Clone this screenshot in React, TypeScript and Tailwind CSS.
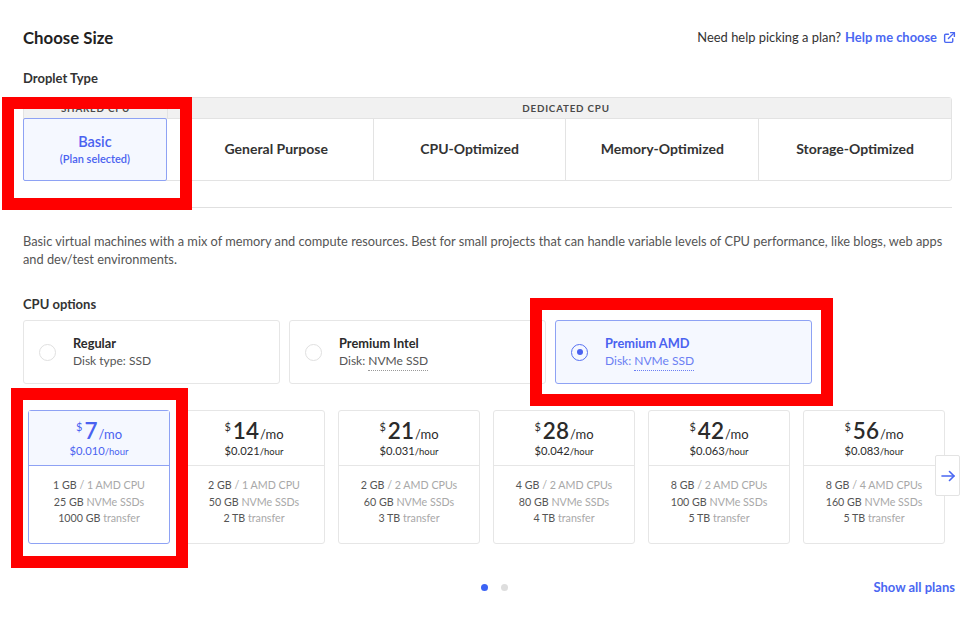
import React from "react";

const plans = [
  { p: "7", h: "0.010", ram: "1 GB", cpu: "1 AMD CPU", ssd: "25 GB", tr: "1000 GB", sel: true },
  { p: "14", h: "0.021", ram: "2 GB", cpu: "1 AMD CPU", ssd: "50 GB", tr: "2 TB" },
  { p: "21", h: "0.031", ram: "2 GB", cpu: "2 AMD CPUs", ssd: "60 GB", tr: "3 TB" },
  { p: "28", h: "0.042", ram: "4 GB", cpu: "2 AMD CPUs", ssd: "80 GB", tr: "4 TB" },
  { p: "42", h: "0.063", ram: "8 GB", cpu: "2 AMD CPUs", ssd: "100 GB", tr: "5 TB" },
  { p: "56", h: "0.083", ram: "8 GB", cpu: "4 AMD CPUs", ssd: "160 GB", tr: "5 TB" },
];

function PlanCard({ d }: { d: (typeof plans)[number] }) {
  const sel = !!d.sel;
  return (
    <div
      className={`w-[142px] h-[134px] shrink-0 rounded-[3px] border flex flex-col ${
        sel ? "border-[#8ea2f4]" : "border-[#e6e6e6]"
      }`}
    >
      <div
        className={`h-[55px] pt-[8px] flex flex-col items-center border-b ${
          sel ? "bg-[#f5f8ff] border-[#8ea2f4] text-[#4a62f0]" : "border-[#e6e6e6] text-[#2b2b2b]"
        }`}
      >
        <div className="h-[23px] flex items-start">
          <span className="text-[11px] leading-[12px] mt-[2px] mr-[2px]">$</span>
          <span className="text-[22.5px] font-semibold leading-[23px]">{d.p}</span>
          <span className="text-[13px] leading-[14px] mt-[8px] ml-[1px]">/mo</span>
        </div>
        <div className="mt-[2px] h-[13px] text-[11.2px] leading-[13px]">
          ${d.h}
          <span className="text-[9.5px]">/hour</span>
        </div>
      </div>
      <div className="flex-1 pt-[11px] flex flex-col items-center text-[10.7px] leading-[16.5px] text-[#a8a8a8]">
        <div>
          <span className="text-[#555]">{d.ram}</span> / {d.cpu}
        </div>
        <div>
          <span className="text-[#555]">{d.ssd}</span> NVMe SSDs
        </div>
        <div>
          <span className="text-[#555]">{d.tr}</span> transfer
        </div>
      </div>
    </div>
  );
}

function CpuOption({
  title,
  label,
  value,
  dotted,
  sel,
}: {
  title: string;
  label: string;
  value: string;
  dotted?: boolean;
  sel?: boolean;
}) {
  return (
    <div
      className={`w-[257px] h-[64px] rounded-[3px] border flex items-center pl-[15px] ${
        sel ? "border-[#8ea2f4] bg-[#f5f8ff]" : "border-[#e6e6e6] bg-white"
      }`}
    >
      {sel ? (
        <div className="w-[17px] h-[17px] rounded-full border-[1.5px] border-[#5670f2] flex items-center justify-center">
          <div className="w-[6px] h-[6px] rounded-full bg-[#4a62f0]" />
        </div>
      ) : (
        <div className="w-[17px] h-[17px] rounded-full border border-[#e0e0e0]" />
      )}
      <div className="ml-[17px] flex flex-col">
        <div
          className={`text-[12.8px] font-bold leading-[18px] ${sel ? "text-[#4a62f0]" : "text-[#2b2b2b]"}`}
        >
          {title}
        </div>
        <div className={`text-[12px] leading-[18px] ${sel ? "text-[#6b7ff3]" : "text-[#555]"}`}>
          {label}{" "}
          <span
            className={
              dotted
                ? `border-b border-dotted ${sel ? "border-[#6b7ff3]" : "border-[#999]"} pb-[2px]`
                : ""
            }
          >
            {value}
          </span>
        </div>
      </div>
    </div>
  );
}

export default function App() {
  const dedicated = ["General Purpose", "CPU-Optimized", "Memory-Optimized", "Storage-Optimized"];
  return (
    <div className="relative w-[975px] h-[621px] bg-white font-['Lato',sans-serif] overflow-hidden">
      <div className="px-[23px] pt-[28px] w-[975px]">
        {/* header */}
        <div className="flex items-center justify-between w-[929px] h-[20px]">
          <div className="text-[16.8px] font-bold text-[#222]">Choose Size</div>
          <div className="flex items-center text-[12.9px] text-[#333] mr-[-4px]">
            Need help picking a plan?
            <span className="ml-[4px] font-bold text-[#4a67f2]">Help me choose</span>
            <svg width="13" height="13" viewBox="0 0 24 24" className="ml-[6px]" fill="none" stroke="#4a67f2" strokeWidth="2.6" strokeLinecap="round" strokeLinejoin="round">
              <path d="M18 14v5a2 2 0 0 1-2 2H5a2 2 0 0 1-2-2V8a2 2 0 0 1 2-2h5" />
              <path d="M14 3h7v7" />
              <path d="M10 14L21 3" />
            </svg>
          </div>
        </div>

        <div className="mt-[20px] text-[13px] font-bold text-[#333] leading-[20px]">Droplet Type</div>

        {/* droplet type table */}
        <div className="mt-[9px] w-[929px] border border-[#e3e3e3] rounded-[3px]">
          <div className="flex h-[21px] bg-[#f1f1f1] border-b border-[#e3e3e3] text-[9.8px] font-bold tracking-[0.08em] text-[#4a4a4a]">
            <div className="w-[144px] border-r border-[#e3e3e3] flex items-center justify-center">SHARED CPU</div>
            <div className="w-[13px]" />
            <div className="flex-1 flex items-center justify-center">DEDICATED CPU</div>
          </div>
          <div className="flex h-[61px]">
            <div className="w-[144px] -ml-px -mt-px -mb-px h-[63px] bg-[#f5f8ff] border border-[#8ea2f4] rounded-[2px] flex flex-col items-center justify-center text-[#4a62f0]">
              <div className="text-[14.5px] font-semibold leading-[18px]">Basic</div>
              <div className="text-[11px] font-semibold leading-[16px]">(Plan selected)</div>
            </div>
            <div className="w-[13px]" />
            {dedicated.map((t, i) => (
              <div
                key={t}
                className={`w-[193px] pb-[2px] flex items-center justify-center text-[14px] font-bold text-[#333] ${
                  i > 0 ? "border-l border-[#e3e3e3]" : ""
                }`}
              >
                {t}
              </div>
            ))}
          </div>
        </div>

        <div className="mt-[26px] w-[929px] border-t border-[#e0e0e0]" />

        <div className="mt-[24px] w-[929px] text-[12.8px] leading-[18px] text-[#555]">
          Basic virtual machines with a mix of memory and compute resources. Best for small projects that can handle variable levels of CPU performance, like blogs, web apps
          <br />
          and dev/test environments.
        </div>

        <div className="mt-[26px] text-[13px] font-bold text-[#333] leading-[20px]">CPU options</div>

        <div className="mt-[6px] flex gap-[9px]">
          <CpuOption title="Regular" label="Disk type:" value="SSD" />
          <CpuOption title="Premium Intel" label="Disk:" value="NVMe SSD" dotted />
          <CpuOption title="Premium AMD" label="Disk:" value="NVMe SSD" dotted sel />
        </div>

        {/* plans */}
        <div className="relative mt-[26px] ml-[5px] flex gap-[13px]">
          {plans.map((d) => (
            <PlanCard key={d.p} d={d} />
          ))}
          <div className="absolute left-[907px] top-[45px] w-[25px] h-[41px] bg-white border border-[#e3e3e3] rounded-[2px] flex items-center justify-center">
            <svg width="14" height="12" viewBox="0 0 14 12" fill="none" stroke="#4a67f2" strokeWidth="1.6" strokeLinecap="round" strokeLinejoin="round">
              <path d="M1 6h12" />
              <path d="M8.5 1.5L13 6l-4.5 4.5" />
            </svg>
          </div>
        </div>

        <div className="relative mt-[36px] w-[932px] h-[14px] flex items-center justify-center">
          <div className="flex gap-[13px] ml-[10px]">
            <div className="w-[7px] h-[7px] rounded-full bg-[#3b63f5]" />
            <div className="w-[7px] h-[7px] rounded-full bg-[#dedede]" />
          </div>
          <div className="absolute right-0 top-0 text-[13px] font-bold text-[#4a67f2] leading-[14px]">Show all plans</div>
        </div>
      </div>

      {/* red annotation boxes */}
      <div className="absolute left-[2px] top-[97px] w-[190px] h-[113px] border-[12px] border-[#ff0000]" />
      <div className="absolute left-[530px] top-[298px] w-[303px] h-[108px] border-[12px] border-[#ff0000]" />
      <div className="absolute left-[11px] top-[388px] w-[177px] h-[180px] border-[12px] border-[#ff0000]" />
    </div>
  );
}
